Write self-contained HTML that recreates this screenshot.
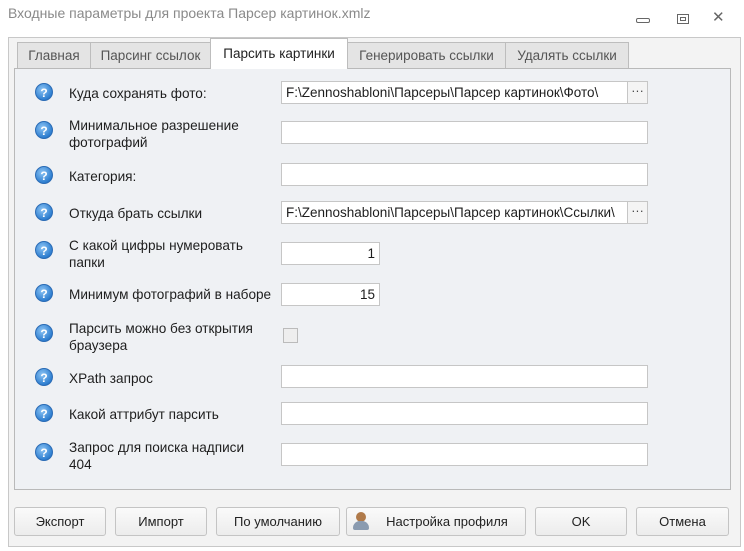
<!DOCTYPE html><html><head><meta charset="utf-8"><style>
*{box-sizing:border-box}body{margin:0;width:744px;height:551px;background:#fff;font-family:"Liberation Sans","DejaVu Sans",sans-serif;font-size:12.5px;color:#1e1e1e;position:relative;overflow:hidden}
.a{position:absolute}
.title{left:8px;top:5px;color:#8a8a8a;font-size:14px}
.frame{left:8px;top:37px;width:733px;height:510px;background:#f3f3f3;border:1px solid #c8c8c8}
.tab{position:absolute;top:42px;height:27px;background:#e4e4e4;border:1px solid #bdbdbd;border-bottom:none;color:#555;font-size:13.5px;text-align:center;line-height:26px;white-space:nowrap}
.tab.on{top:38px;height:31px;background:#fff;color:#222;line-height:30px;z-index:2}
.panel{left:14px;top:68px;width:717px;height:422px;background:#eff1f4;border:1px solid #b9b9b9}
.q{position:absolute;left:35px;width:18px;height:18px;border-radius:50%;background:radial-gradient(circle at 40% 35%,#8cc4f4,#2f7fd0 70%,#1e5fa8);color:#fff;font-size:12px;font-weight:bold;text-align:center;line-height:18px;border:1px solid #2a6bb5}
.lb{position:absolute;left:69px;line-height:17px;font-size:13.6px;white-space:nowrap}
.in{position:absolute;left:281px;height:23px;background:#fff;border:1px solid #c6c6c6;line-height:21px;padding:0 4px;font-size:13.5px;white-space:nowrap;overflow:hidden}
.w{width:367px}.s{width:99px;text-align:right}
.dots{position:absolute;left:627px;width:21px;height:23px;border:1px solid #c6c6c6;background:#f4f4f4;text-align:center;line-height:18px;color:#444}
.btn{position:absolute;top:507px;height:29px;border:1px solid #c4c4c4;border-radius:3px;background:linear-gradient(#fafafa,#ececec);text-align:center;line-height:27px;font-size:13px;color:#222}
</style></head><body>
<div class="a title">Входные параметры для проекта Парсер картинок.xmlz</div>
<div class="a" style="left:636px;top:18px;width:14px;height:5px;border:1px solid #666;border-radius:2px"></div>
<div class="a" style="left:677px;top:14px;width:12px;height:10px;border:1px solid #666"></div>
<div class="a" style="left:680px;top:17px;width:6px;height:4px;border:1px solid #666"></div>
<div class="a" style="left:712px;top:8px;color:#666;font-size:15px">✕</div>
<div class="a frame"></div>
<div class="tab" style="left:17px;width:74px">Главная</div>
<div class="tab" style="left:90px;width:121px">Парсинг ссылок</div>
<div class="tab on" style="left:210px;width:138px">Парсить картинки</div>
<div class="tab" style="left:347px;width:159px">Генерировать ссылки</div>
<div class="tab" style="left:505px;width:124px">Удалять ссылки</div>
<div class="a panel"></div>

<div class="q" style="top:83px">?</div><div class="lb" style="top:85px">Куда сохранять фото:</div>
<div class="in w" style="top:81px;width:347px">F:\Zennoshabloni\Парсеры\Парсер картинок\Фото\</div><div class="dots" style="top:81px">···</div>

<div class="q" style="top:121px">?</div><div class="lb" style="top:117px">Минимальное разрешение<br>фотографий</div>
<div class="in w" style="top:121px"></div>

<div class="q" style="top:166px">?</div><div class="lb" style="top:168px">Категория:</div>
<div class="in w" style="top:163px"></div>

<div class="q" style="top:203px">?</div><div class="lb" style="top:205px">Откуда брать ссылки</div>
<div class="in w" style="top:201px;width:347px">F:\Zennoshabloni\Парсеры\Парсер картинок\Ссылки\</div><div class="dots" style="top:201px">···</div>

<div class="q" style="top:241px">?</div><div class="lb" style="top:237px">С какой цифры нумеровать<br>папки</div>
<div class="in s" style="top:242px">1</div>

<div class="q" style="top:284px">?</div><div class="lb" style="top:286px">Минимум фотографий в наборе</div>
<div class="in s" style="top:283px">15</div>

<div class="q" style="top:324px">?</div><div class="lb" style="top:320px">Парсить можно без открытия<br>браузера</div>
<div class="a" style="left:283px;top:328px;width:15px;height:15px;border:1px solid #bbb;background:#eee"></div>

<div class="q" style="top:368px">?</div><div class="lb" style="top:370px">XPath запрос</div>
<div class="in w" style="top:365px"></div>

<div class="q" style="top:404px">?</div><div class="lb" style="top:406px">Какой аттрибут парсить</div>
<div class="in w" style="top:402px"></div>

<div class="q" style="top:443px">?</div><div class="lb" style="top:439px">Запрос для поиска надписи<br>404</div>
<div class="in w" style="top:443px"></div>

<div class="btn" style="left:14px;width:92px">Экспорт</div>
<div class="btn" style="left:115px;width:92px">Импорт</div>
<div class="btn" style="left:216px;width:124px">По умолчанию</div>
<div class="btn" style="left:346px;width:180px;padding-left:22px">Настройка профиля</div>
<div class="a" style="left:356px;top:512px;width:10px;height:10px;border-radius:50%;background:#b07a4a"></div>
<div class="a" style="left:353px;top:521px;width:16px;height:9px;border-radius:7px 7px 2px 2px;background:#8a9bb0"></div>
<div class="btn" style="left:535px;width:92px">OK</div>
<div class="btn" style="left:636px;width:93px">Отмена</div>
</body></html>
